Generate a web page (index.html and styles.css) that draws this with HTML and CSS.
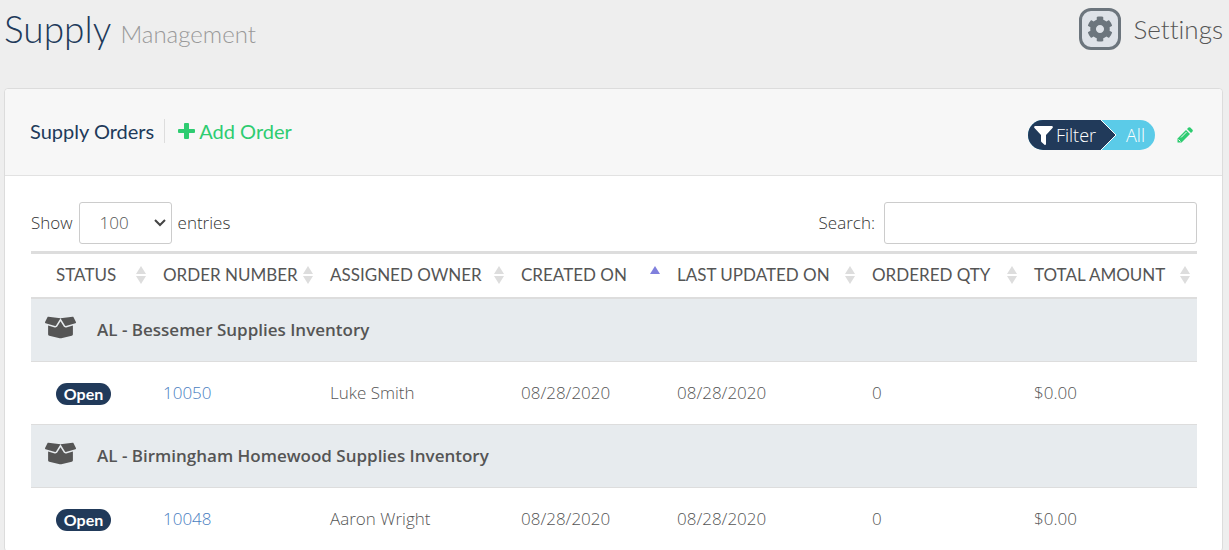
FILE: index.html
```html
<!DOCTYPE html>
<html lang="en">
<head>
    <meta charset="UTF-8">
    <meta name="viewport" content="width=device-width, initial-scale=1.0">
    <title>Supply Management</title>
    <link rel="stylesheet" href="styles.css">
</head>
<body>
    <!-- shared icons -->
    <svg class="sprite" aria-hidden="true">
        <symbol id="sort" viewBox="0 0 10 18">
            <path d="M5 0l5 8H0zM0 10h10l-5 8z"/>
        </symbol>
        <symbol id="sort-asc" viewBox="0 0 10 18">
            <path d="M5 0l5 8H0z"/>
        </symbol>
        <symbol id="box-open" viewBox="0 0 640 512">
            <path d="M425.7 256c-16.9 0-32.8-9-41.4-23.4L320 126l-64.2 106.6c-8.7 14.5-24.6 23.5-41.5 23.5-4.5 0-9-.6-13.3-1.9L64 215v178c0 14.7 10 27.5 24.2 31l216.2 54.1c10.2 2.5 20.9 2.5 31 0L551.8 424c14.2-3.6 24.2-16.4 24.2-31V215l-137 39.1c-4.3 1.3-8.8 1.9-13.3 1.9zm212.6-112.2L586.8 41c-3.1-6.2-9.8-9.8-16.7-8.9L320 64l91.7 152.1c3.8 6.3 11.4 9.3 18.5 7.3l197.9-56.5c9.9-2.9 14.7-13.9 10.2-23.1zM53.2 41L1.7 143.8c-4.6 9.2.3 20.2 10.1 23l197.9 56.5c7.1 2 14.7-1 18.5-7.3L320 64 69.8 32.1c-6.9-.8-13.5 2.7-16.6 8.9z"/>
        </symbol>
    </svg>

    <header class="page-header">
        <h1>Supply <small>Management</small></h1>
        <button type="button" class="settings">
            <span class="settings-icon">
                <svg width="26" height="26" viewBox="0 0 512 512"><path d="M487.4 315.7l-42.6-24.6c4.3-23.2 4.3-47 0-70.2l42.6-24.6c4.9-2.8 7.1-8.6 5.5-14-11.1-35.6-30-67.8-54.7-94.6-3.8-4.1-10-5.1-14.8-2.3L380.8 110c-17.9-15.4-38.5-27.3-60.8-35.1V25.8c0-5.6-3.9-10.5-9.4-11.7-36.7-8.2-74.3-7.8-109.2 0-5.5 1.2-9.4 6.1-9.4 11.7V75c-22.2 7.9-42.8 19.8-60.8 35.1L88.7 85.5c-4.9-2.8-11-1.9-14.8 2.3-24.7 26.7-43.6 58.9-54.7 94.6-1.7 5.4.6 11.2 5.5 14L67.3 221c-4.3 23.2-4.3 47 0 70.2l-42.6 24.6c-4.9 2.8-7.1 8.6-5.5 14 11.1 35.6 30 67.8 54.7 94.6 3.8 4.1 10 5.1 14.8 2.3l42.6-24.6c17.9 15.4 38.5 27.3 60.8 35.1v49.2c0 5.6 3.9 10.5 9.4 11.7 36.7 8.2 74.3 7.8 109.2 0 5.5-1.2 9.4-6.1 9.4-11.7v-49.2c22.2-7.9 42.8-19.8 60.8-35.1l42.6 24.6c4.9 2.8 11 1.9 14.8-2.3 24.7-26.7 43.6-58.9 54.7-94.6 1.5-5.5-.7-11.3-5.6-14.1zM256 336c-44.1 0-80-35.9-80-80s35.9-80 80-80 80 35.9 80 80-35.9 80-80 80z"/></svg>
            </span>
            Settings
        </button>
    </header>

    <main class="card">
        <div class="card-header">
            <h2>Supply Orders</h2>
            <a href="#" class="add-order">
                <svg width="17" height="16" viewBox="0 0 17 16"><path d="M7 0h3a1 1 0 0 1 1 1v5h5a1 1 0 0 1 1 1v2a1 1 0 0 1-1 1h-5v5a1 1 0 0 1-1 1H7a1 1 0 0 1-1-1v-5H1a1 1 0 0 1-1-1V7a1 1 0 0 1 1-1h5V1a1 1 0 0 1 1-1z"/></svg>
                Add Order
            </a>
            <div class="card-actions">
                <button type="button" class="filter">
                    <span class="filter-label">
                        <svg width="19" height="19" viewBox="0 0 19 19"><path d="M1 0h17q1.500 0.800 0.500 2L12 9v9q-0.500 1.500-1.500 0.800L7.400 16Q7 15.600 7 15V9L0.500 2Q-0.500 0.800 1 0z"/></svg>
                        Filter
                    </span>
                    <svg class="filter-arrow" width="16" height="30" viewBox="0 0 16 30"><path class="arrow-fill" d="M0 0l15 15L0 30z"/><path class="arrow-line" d="M0 0l15 15L0 30"/></svg>
                    <span class="filter-value">All</span>
                </button>
                <button type="button" class="edit" aria-label="Edit">
                    <svg width="16" height="16" viewBox="0 0 16 16"><path d="M9 3l4 4-8.500 8.500L0.500 15.500V11.500zM10 2l1.500-1.500q0.900-0.700 1.800 0l2.200 2.200q0.700 0.900 0 1.800L14 6z"/><path class="edit-cut" d="M4 10.500l5.500-5.500M1.500 12.500l2 2"/></svg>
                </button>
            </div>
        </div>

        <div class="card-body">
            <div class="table-tools">
                <label>Show
                    <select>
                        <option>10</option>
                        <option>25</option>
                        <option>50</option>
                        <option selected>100</option>
                    </select>
                    entries</label>
                <label>Search: <input type="search"></label>
            </div>

            <table>
                <colgroup>
                    <col class="col-status">
                    <col class="col-number">
                    <col class="col-owner">
                    <col class="col-created">
                    <col class="col-updated">
                    <col class="col-qty">
                    <col class="col-total">
                </colgroup>
                <thead>
                    <tr>
                        <th><button type="button">Status <svg><use href="#sort"/></svg></button></th>
                        <th><button type="button">Order Number <svg><use href="#sort"/></svg></button></th>
                        <th><button type="button">Assigned Owner <svg><use href="#sort"/></svg></button></th>
                        <th aria-sort="ascending"><button type="button">Created On <svg class="sorted"><use href="#sort-asc"/></svg></button></th>
                        <th><button type="button">Last Updated On <svg><use href="#sort"/></svg></button></th>
                        <th><button type="button">Ordered Qty <svg><use href="#sort"/></svg></button></th>
                        <th><button type="button">Total Amount <svg><use href="#sort"/></svg></button></th>
                    </tr>
                </thead>
                <tbody>
                    <tr class="group">
                        <td colspan="7"><div class="group-name"><svg><use href="#box-open"/></svg> AL - Bessemer Supplies Inventory</div></td>
                    </tr>
                    <tr>
                        <td><span class="badge">Open</span></td>
                        <td><a href="#">10050</a></td>
                        <td>Luke Smith</td>
                        <td>08/28/2020</td>
                        <td>08/28/2020</td>
                        <td>0</td>
                        <td>$0.00</td>
                    </tr>
                    <tr class="group">
                        <td colspan="7"><div class="group-name"><svg><use href="#box-open"/></svg> AL - Birmingham Homewood Supplies Inventory</div></td>
                    </tr>
                    <tr>
                        <td><span class="badge">Open</span></td>
                        <td><a href="#">10048</a></td>
                        <td>Aaron Wright</td>
                        <td>08/28/2020</td>
                        <td>08/28/2020</td>
                        <td>0</td>
                        <td>$0.00</td>
                    </tr>
                </tbody>
            </table>
        </div>
    </main>
</body>
</html>
```
FILE: styles.css
```css
* { box-sizing: border-box; }
body { margin: 0; background: #eeeeee; color: #555; font-family: "Open Sans", sans-serif; font-size: 17px; font-weight: 300; line-height: 24px; font-variant-ligatures: none; overflow: hidden; }
button { padding: 0; border: none; background: none; color: inherit; font: inherit; font-variant-ligatures: none; cursor: pointer; }
a { color: #4a7ebf; text-decoration: none; }
svg { fill: currentColor; flex: none; }
.sprite { display: none; }

/* Page header */
.page-header { display: flex; justify-content: space-between; align-items: center; height: 58px; margin-bottom: 30px; padding: 0 6px 0 4px; font-family: Lato, sans-serif; }
h1 { margin: 0; padding-top: 4px; color: #213a5a; font-size: 37px; font-weight: 300; line-height: 54px; }
h1 small { color: #999; font-size: 24px; }
.settings { display: flex; align-items: center; gap: 12px; font-size: 26px; font-weight: 300; }
.settings-icon { display: flex; align-items: center; justify-content: center; width: 42px; height: 42px; border: 3px solid #6c757d; border-radius: 12px; background: #dee2e8; color: #6c757d; }

/* Card */
.card { margin: 0 6px 0 4px; border: 1px solid #dcdcdc; border-radius: 4px; background: white; }
.card-header { display: flex; align-items: center; height: 87px; padding: 0 29px 2px 25px; border-bottom: 1px solid #e2e2e2; border-radius: 4px 4px 0 0; background: #f7f7f7; font-family: Lato, sans-serif; }
h2 { margin: 0; padding-right: 10px; border-right: 1px solid #ddd; color: #213a5a; font-size: 20px; font-weight: 400; line-height: 24px; }
.add-order { display: flex; align-items: center; gap: 4px; margin-left: 13px; color: #2ecc71; font-size: 20px; font-weight: 400; }

.card-actions { display: flex; align-items: center; gap: 22px; margin-left: auto; padding-top: 8px; }
.filter { display: flex; height: 30px; border-radius: 15px; background: #5bcbe8; color: white; font-size: 18px; font-family: "Open Sans", sans-serif; line-height: 30px; overflow: hidden; }
.filter-label { display: flex; align-items: center; gap: 3px; padding: 0 5px 0 6px; background: #213a5a; }
.filter-value { padding: 0 10px 0 9px; }
.arrow-fill { fill: #213a5a; }
.arrow-line { fill: none; stroke: white; }
.edit { display: flex; color: #2ecc71; }
.edit-cut { fill: none; stroke: #f7f7f7; }

.card-body { padding: 26px 25px 0 26px; }
.table-tools { display: flex; justify-content: space-between; margin-bottom: 7px; }
.table-tools label { display: flex; align-items: center; gap: 6px; color: #333; }
.table-tools label:last-child { gap: 9px; }
select, input { height: 42px; border: 1px solid #ccc; border-radius: 3px; background: white; color: #555; font: inherit; }
select { width: 93px; padding: 0 0 0 20px; appearance: none; background: white url("data:image/svg+xml,%3Csvg xmlns='http://www.w3.org/2000/svg' width='12' height='8'%3E%3Cpath d='M1 1l5 5 5-5' fill='none' stroke='%23444' stroke-width='2'/%3E%3C/svg%3E") no-repeat right 5px center; }
input { width: 313px; padding: 0 12px; }

/* Orders table */
table { width: 100%; border-top: 3px solid #ddd; border-collapse: separate; border-spacing: 0; table-layout: fixed; }
.col-status { width: 124px; }
.col-number { width: 167px; }
.col-owner { width: 191px; }
.col-created { width: 156px; }
.col-updated { width: 195px; }
.col-qty { width: 162px; }
.col-total { width: 171px; }
th { height: 45px; padding: 0 9px 2px 8px; border-bottom: 2px solid #ddd; font-family: Lato, sans-serif; font-size: 17px; font-weight: 400; }
th:last-child { padding-right: 7px; }
th button { display: flex; align-items: center; justify-content: space-between; width: 100%; text-transform: uppercase; white-space: nowrap; }
th svg { width: 10px; height: 18px; color: #ddd; }
th .sorted { color: #8080dd; }
td { height: 63px; padding: 0 8px; border-bottom: 1px solid #ddd; }
th:first-child, td:first-child { padding-left: 25px; }
.group td:first-child { padding-left: 14px; background: #e7ebee; font-weight: 600; }
.group-name { display: flex; align-items: center; gap: 21px; }
.group-name svg { width: 31px; height: 25px; margin-bottom: 5px; }
.badge { display: block; width: 55px; margin-top: 2px; border-radius: 11px; background: #213a5a; color: white; font-family: Lato, sans-serif; font-size: 16px; font-weight: 700; line-height: 22px; text-align: center; }
```
